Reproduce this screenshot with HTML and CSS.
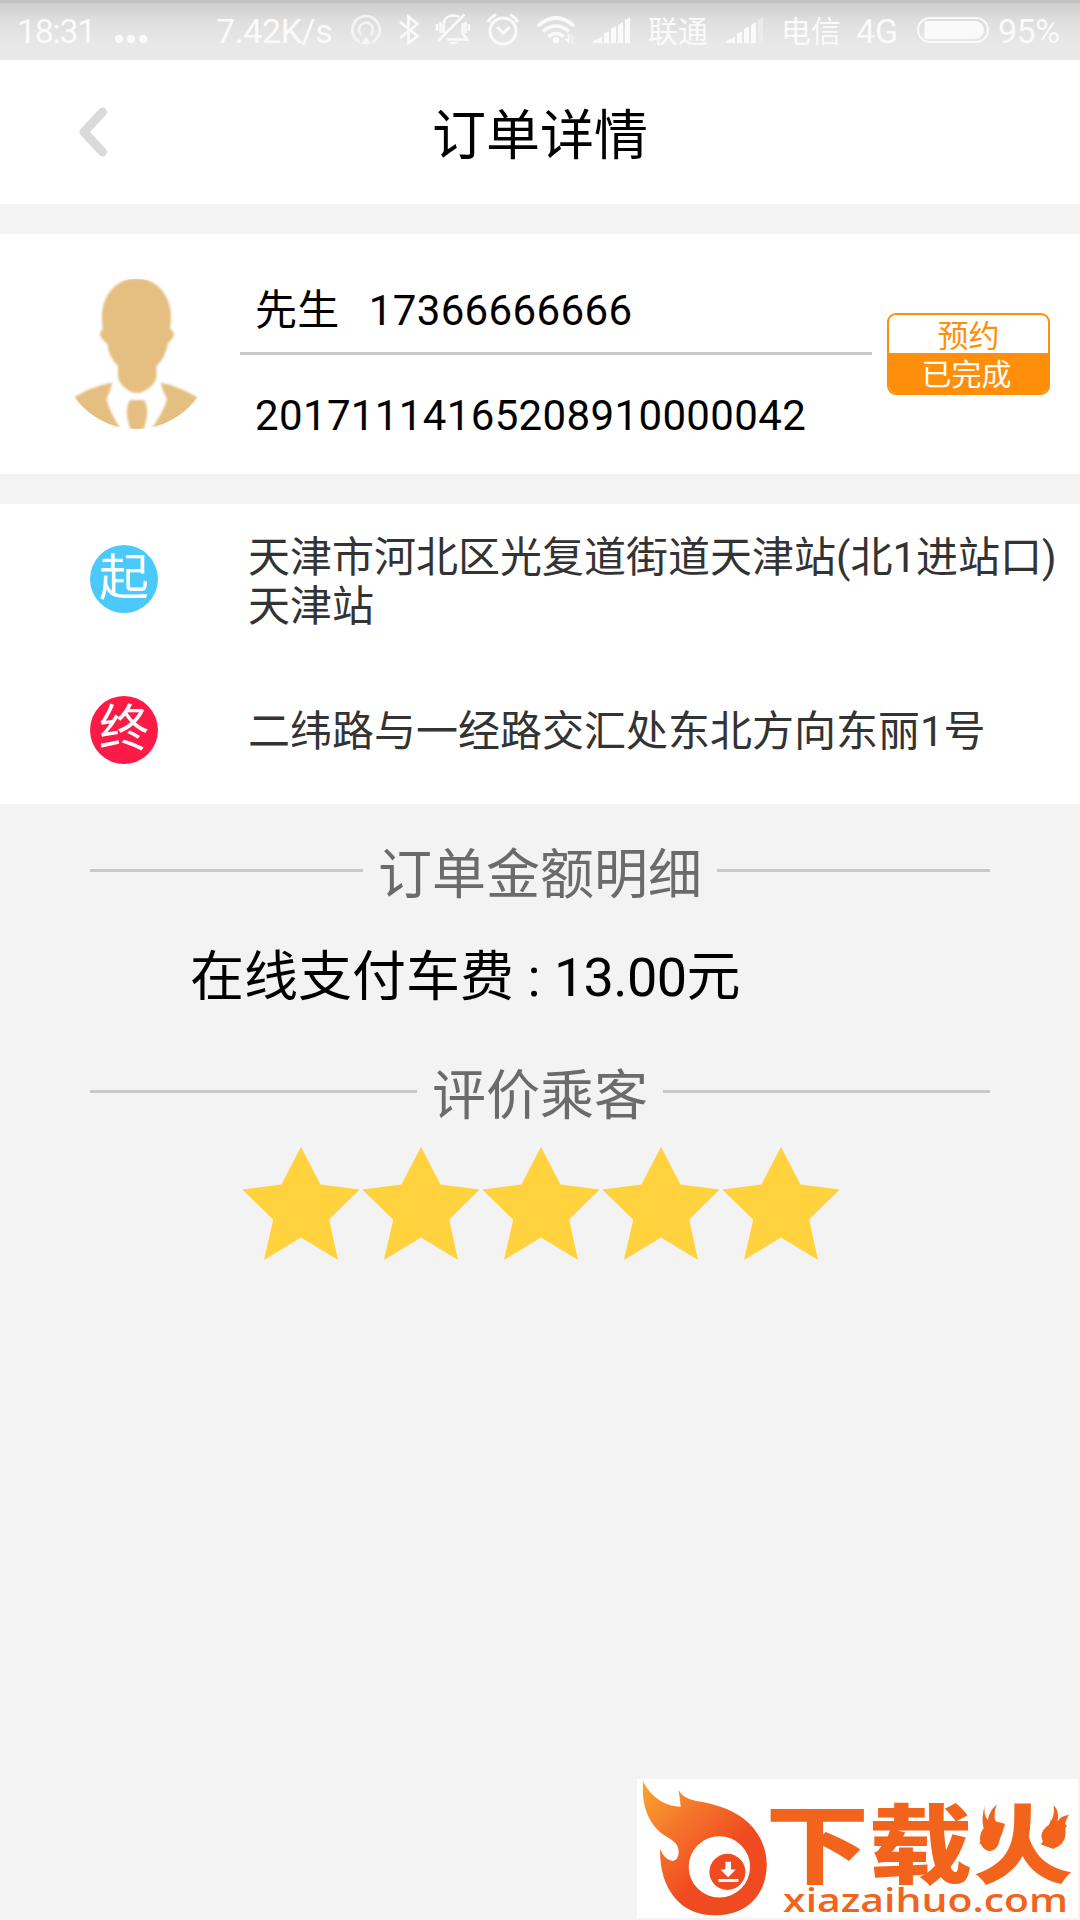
FILE: index.html
```html
<!DOCTYPE html>
<html lang="zh-CN">
<head>
<meta charset="utf-8">
<title>订单详情</title>
<link rel="stylesheet" href="styles.css">
</head>
<body>
<div class="screen">
  <div class="status">
    <span class="clock">18:31</span>
    <svg width="36" height="60" viewBox="113 0 36 60"><g fill="#fafafa"><circle cx="119" cy="39" r="4.2"/><circle cx="131" cy="39" r="4.2"/><circle cx="143.300" cy="39" r="4.2"/></g></svg>
    <span class="speed">7.42K/s</span>
    <svg width="32" height="60" viewBox="350 0 32 60"><g fill="none" stroke="#f3f3f3" stroke-width="2.700"><path d="M360 42.200A13.700 13.700 0 1 1 372 42.200"/><path d="M361.500 35A7 7 0 1 1 370.500 35"/></g><path d="M366 36l4.500 8h-9z" fill="#f6f6f6"/></svg>
    <svg width="22" height="60" viewBox="398 0 22 60"><path d="M400 22l17.500 14-9 7V17l9 7L400 38" fill="none" stroke="#fafafa" stroke-width="2.700"/></svg>
    <svg width="36" height="60" viewBox="434 0 36 60"><g fill="none" stroke="#fafafa" stroke-width="2.500"><path d="M437 24v7M440.500 22v11M465.500 22v11M469 24v7M464.500 14.500L438 41"/><path d="M443.500 33v-7c0-7 4-10.500 10-10.500 2.500 0 4 .5 5.500 1.500M462.500 23v10l4.500 6.500h-20"/></g><path d="M448.500 42h9.500q-4.700 5-9.500 0z" fill="#fafafa"/></svg>
    <svg width="34" height="60" viewBox="486 0 34 60"><g fill="none" stroke="#fafafa" stroke-width="3"><circle cx="503" cy="31" r="13"/><path d="M497 27l6.300 6 6.300-6M488 22q3-5 8-7.500M518 22q-3-5-8-7.500"/></g></svg>
    <svg width="42" height="60" viewBox="535 0 42 60"><g fill="none" stroke="#fafafa" stroke-width="3.600"><path d="M538 26q18-16 36 0M543 31.500q13-11 26 0M548.500 36.500q7.500-6 15 0"/></g><circle cx="556" cy="40" r="3.200" fill="#fafafa"/><path d="M569.500 34v10l-5-5h3v-5z" fill="#fafafa"/><path d="M571 44V34l5 5h-3v5z" fill="#efefef"/></svg>
    <svg width="39" height="60" viewBox="592 0 39 60"><path d="M593 43v-2l9-4v6zM604 33.500l5-2V43h-5zM611 29l5-3v17h-5zM618 25l5-3v21h-5zM625 20l5-2.500V43h-5z" fill="#fafafa"/></svg>
    <span class="carrier">联通</span>
    <svg width="39" height="60" viewBox="592 0 39 60"><path d="M593 43v-2l9-4v6zM604 33.500l5-2V43h-5zM611 29l5-3v17h-5zM618 25l5-3v21h-5z" fill="#fafafa"/><path d="M625 20l5-2.500V43h-5z" fill="#ebebeb"/></svg>
    <span class="carrier">电信</span>
    <span class="network">4G</span>
    <svg width="74" height="60" viewBox="916 0 74 60"><rect x="918" y="18" width="70" height="24" rx="12" fill="none" stroke="#fafafa" stroke-width="2"/><path d="M926 21h49a9 9 0 0 1 0 18h-49q-1.500 0-1.500-1.500v-15q0-1.500 1.500-1.500z" fill="#fafafa"/></svg>
    <span class="percent">95%</span>
  </div>

  <header class="header">
    <svg class="back" width="28" height="50" viewBox="0 0 28 50"><path d="M23.500 5L5 25l18.500 20" fill="none" stroke="#dadada" stroke-width="9" stroke-linecap="round" stroke-linejoin="round"/></svg>
    <h1>订单详情</h1>
  </header>

  <section class="card passenger">
    <svg class="avatar" width="150" height="150" viewBox="0 0 150 150">
      <defs>
        <clipPath id="round"><circle cx="75" cy="75" r="75"/></clipPath>
        <filter id="soft"><feGaussianBlur stdDeviation="1.1"/></filter>
      </defs>
      <g clip-path="url(#round)"><g fill="#e5bf81" filter="url(#soft)">
        <path d="M75 -1C93 -1 110 14 110 38Q109.500 46 109 50Q113 52 113 56Q111 61 107 64C105 75 101 82 95.500 87L95.500 98C94 106 84 114 75.500 114C68 114 58.500 106 57 98L57 87C51 81 47 73 46.500 65Q41 61 39 56Q39 52 42 50Q41 46 41 38C41 14 58 -1 75 -1Z"/>
        <path d="M6 124Q25 108 51.500 103.500L49 112L45.500 120Q49 134 61 152L0 152Z"/>
        <path d="M144 124Q123 108 99.500 103.500L102 112L106 120Q104 130 89 152L150 152Z"/>
        <path d="M69 121h14q4 7 3 16L82.500 152h-13L66 137q-1-9 3-16z"/>
      </g></g>
    </svg>
    <div class="details">
      <p class="contact">先生<span class="phone">17366666666</span></p>
      <p class="number">20171114165208910000042</p>
    </div>
    <div class="badge"><span class="badge-type">预约</span><span class="badge-state">已完成</span></div>
  </section>

  <section class="card route">
    <div class="stop start"><i class="dot">起</i><p>天津市河北区光复道街道天津站(北1进站口)<br>天津站</p></div>
    <div class="stop end"><i class="dot">终</i><p>二纬路与一经路交汇处东北方向东丽1号</p></div>
  </section>

  <h2 class="divider fees">订单金额明细</h2>
  <p class="fare">在线支付车费 : <span class="amount">13.00</span>元</p>
  <h2 class="divider rating">评价乘客</h2>
  <svg class="stars" width="600" height="116" viewBox="0 0 600 116">
    <defs><path id="star" d="M60 1L79.600 38.500L118.600 43.500L88.200 73.500L97 114L60 91.500L23 114L32.200 73.500L1.300 43.500L40.400 38.500Z"/></defs>
    <g fill="#ffd23e"><use href="#star"/><use href="#star" x="120"/><use href="#star" x="240"/><use href="#star" x="360"/><use href="#star" x="480"/></g>
  </svg>

  <div class="brand">
    <svg width="441" height="139" viewBox="51 57 1322 416" preserveAspectRatio="none">
      <defs><linearGradient id="fire" x1="70" y1="65" x2="300" y2="300" gradientUnits="userSpaceOnUse"><stop offset="0" stop-color="#fba62c"/><stop offset=".5" stop-color="#f5752b"/><stop offset="1" stop-color="#f04a20"/></linearGradient></defs>
      <path fill="url(#fire)" d="M70 64C88 105 130 140 182 140Q180 112 175 90Q190 115 225 122C300 133 350 155 385 188C420 222 440 265 440 315C438 405 380 465 285 465C180 465 118 385 120 266C130 290 145 303 160 302Q176 298 176 275C176 245 150 238 125 220C85 190 62 130 70 64Z"/>
      <circle cx="298" cy="320" r="92" fill="#fff"/>
      <circle cx="322" cy="335" r="54" fill="#f04a20"/>
      <path d="M316 305h17v23h14l-23 23-23-23h15zM295 356h60v9h-60z" fill="#fff"/>
      <g fill="#f2631c">
        <text class="brand-name" x="436" y="350" textLength="620" lengthAdjust="spacingAndGlyphs">下载</text>
        <text class="brand-name" x="1058" y="350" textLength="300" lengthAdjust="spacingAndGlyphs">火</text>
        <path d="M1094 135Q1088 160 1102 180Q1108 150 1130 133Q1118 160 1126 185Q1142 215 1138 240Q1132 270 1108 273Q1080 268 1079 235Q1080 215 1090 205Q1082 175 1094 135Z"/>
        <path d="M1300 135Q1318 155 1312 184Q1320 168 1346 164Q1330 185 1336 215Q1335 255 1300 264Q1268 260 1263 228Q1265 208 1285 195Q1305 170 1300 135Z"/>
        <text class="brand-url" x="489" y="455" textLength="854" lengthAdjust="spacingAndGlyphs">xiazaihuo.com</text>
      </g>
    </svg>
  </div>
</div>
</body>
</html>
```
FILE: styles.css
```css
* { box-sizing: border-box; margin: 0; padding: 0; }

body {
  background: #f3f3f3;
  color: #000;
  font-family: Roboto, "Noto Sans CJK SC", sans-serif;
}

.screen {
  width: 1080px;
  height: 1920px;
  display: flex;
  flex-direction: column;
  overflow: hidden;
}

svg { display: block; }

.status {
  flex: none;
  height: 60px;
  padding-left: 19px;
  display: grid;
  grid-template-columns: 94px 103px 134px 48px 36px 52px 49px 57px 56px 77px 56px 75px 60px 82px 64px;
  background: linear-gradient(#c1c1c1 3px, #cecece 3px, #dedede 20px, #e8e8e8 44px);
  color: #fafafa;
  font-size: 34px;
  line-height: 63px;
  white-space: nowrap;
}
.clock { letter-spacing: -1.3px; margin-left: -2px; }
.speed { letter-spacing: -0.4px; }
.carrier { font-size: 30px; line-height: 64px; }
.percent { letter-spacing: -0.5px; }

.header {
  flex: none;
  height: 144px;
  padding-left: 79px;
  display: grid;
  grid-template-columns: 28px 866px;
  align-items: center;
  background: #fff;
}
h1 {
  font-size: 54px;
  font-weight: 400;
  line-height: 60px;
  text-align: center;
  padding-top: 9px;
}

.card {
  flex: none;
  margin-top: 30px;
  background: #fff;
}

.passenger {
  height: 240px;
  display: flex;
  align-items: center;
  padding-left: 61px;
  font-size: 42px;
}
.details { width: 632px; margin-left: 29px; letter-spacing: 0.36px; }
.contact { height: 121px; line-height: 153px; padding-left: 15px; border-bottom: 3px solid #c9c9c9; }
.phone { margin-left: 29px; }
.number { height: 119px; line-height: 122px; padding-left: 15px; }
.badge {
  width: 163px;
  height: 82px;
  margin-left: 15px;
  border: 2px solid #ff8f0a;
  border-radius: 9px;
  overflow: hidden;
  text-align: center;
  font-family: "Noto Sans CJK SC", sans-serif;
  font-size: 31px;
}
.badge span { display: block; height: 39px; }
.badge .badge-type { height: 38px; color: #ff8f0a; line-height: 37px; }
.badge .badge-state { height: 40px; padding-right: 4px; background: #ff8f0a; color: #fff; font-size: 30px; line-height: 38px; }

.route {
  height: 300px;
  padding: 25px 0 0 90px;
  color: #333;
  font-size: 42px;
  line-height: 49px;
}
.stop { display: flex; }
.stop p { margin-left: 90px; white-space: nowrap; padding-top: 4px; }
.end { margin-top: 54px; }
.end p { padding-top: 11px; }
.dot {
  width: 68px;
  height: 68px;
  border-radius: 50%;
  color: #fff;
  font: 400 50px/56px "Noto Sans CJK SC", sans-serif;
  text-align: center;
}
.start { height: 113px; }
.start .dot { margin-top: 16px; background: #4bc9fb; }
.end .dot { background: #fb1b46; }

.divider {
  flex: none;
  height: 60px;
  margin: 0 90px;
  display: flex;
  align-items: center;
  gap: 15px;
  color: #6b6b6b;
  font-size: 54px;
  font-weight: 400;
  line-height: 60px;
}
.divider::before, .divider::after {
  content: "";
  flex: 1;
  height: 3px;
  margin-bottom: 11px;
  background: #c9c9c9;
}
.fees { margin-top: 42px; }
.fare {
  flex: none;
  margin: 42px 0 0 190px;
  font-size: 54px;
  line-height: 60px;
}
.amount { letter-spacing: -0.6px; }
.rating { margin-top: 59px; }
.stars { flex: none; margin: 19px 0 0 241px; }

.brand {
  flex: none;
  width: 441px;
  height: 139px;
  margin: auto 2px 2px auto;
  background: #fff;
}
.brand-name { font: 900 258px "Noto Sans CJK SC", sans-serif; }
.brand-url { font: 600 98px "Open Sans", sans-serif; }
```
